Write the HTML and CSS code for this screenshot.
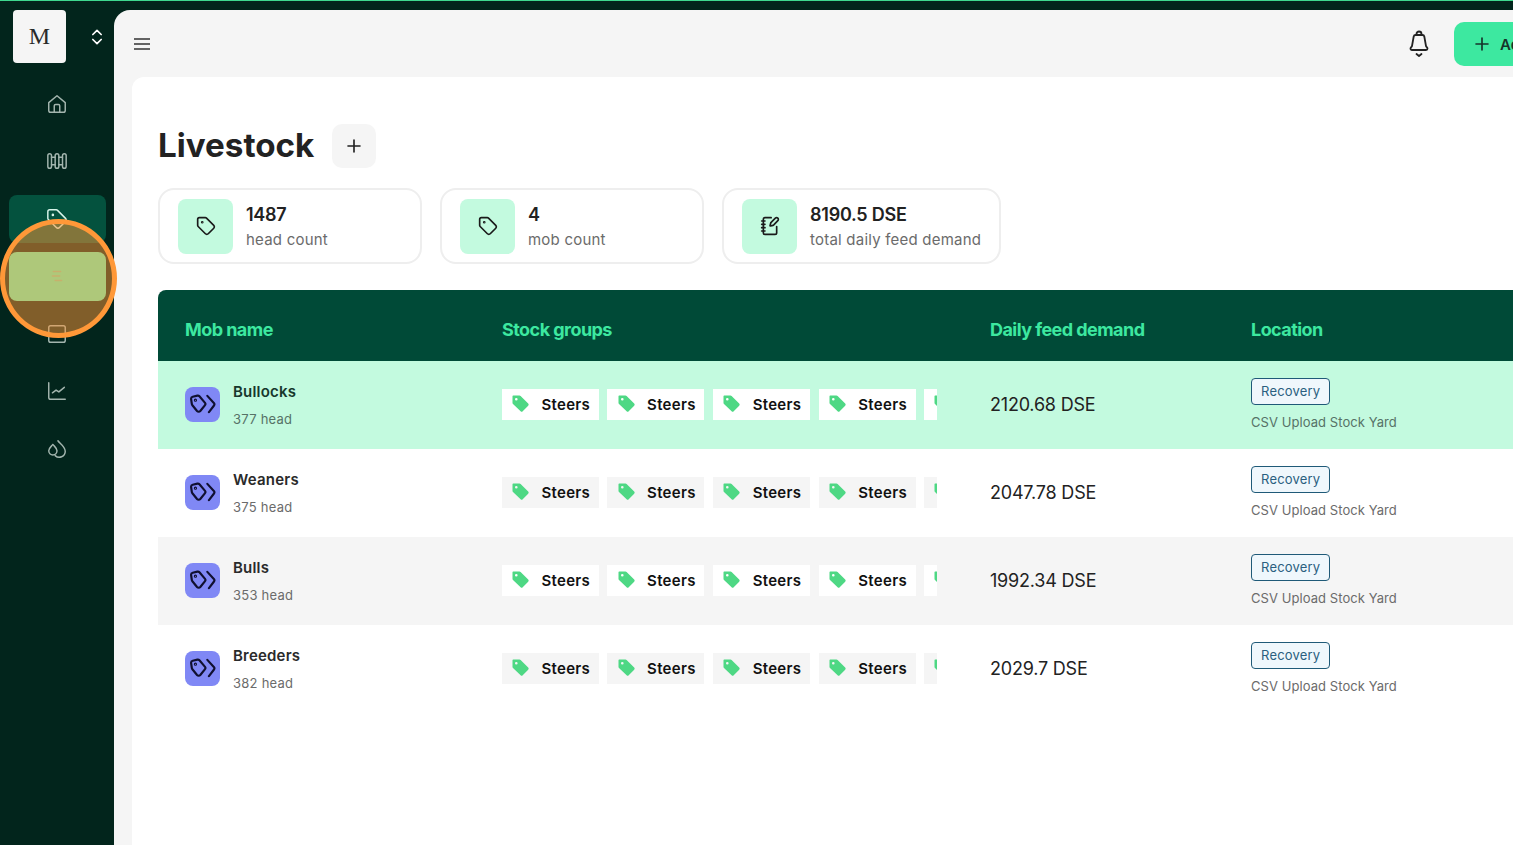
FILE: index.html
```html
<!DOCTYPE html>
<html lang="en">

<head>
  <meta charset="UTF-8" />
  <meta name="viewport" content="width=device-width, initial-scale=1.0" />
  <title>Livestock</title>
  <link rel="stylesheet" href="styles.css">
</head>

<body>
  <svg class="icon-defs" aria-hidden="true">
    <symbol id="i-tag" viewBox="0 0 24 24"><path d="M12.6 2.6A2 2 0 0 0 11.2 2H4a2 2 0 0 0-2 2v7.2a2 2 0 0 0 .6 1.4l8.7 8.7a2.4 2.4 0 0 0 3.4 0l6.6-6.6a2.4 2.4 0 0 0 0-3.4z" /><circle cx="7.5" cy="7.5" r=".6" /></symbol>
    <symbol id="i-tags" viewBox="0 0 24 24"><path d="M2.500 5.300 6.800 4.300a2 2 0 0 1 1.900.6l5 5.800a2 2 0 0 1 0 2.600l-4.200 5.200a2 2 0 0 1-3 0l-4.300-5.300a2 2 0 0 1-.5-1.200L1 7.200a2 2 0 0 1 1.500-1.900z" /><circle cx="5" cy="8.500" r=".5" /><path d="M16 4.500l6 6.500a2 2 0 0 1 0 2.600L17.500 19.500" /></symbol>
    <symbol id="i-chip" viewBox="0 0 20 20"><path class="solid" d="M2.200 1.500h6.300a1.500 1.500 0 0 1 1.100.5l7.600 7.600a1.500 1.500 0 0 1 0 2.100l-5.500 5.500a1.500 1.500 0 0 1-2.100 0L2 10.100a1.500 1.500 0 0 1-.5-1.100V2.200a.7.7 0 0 1 .7-.7zM5.300 4a1.300 1.300 0 1 0 0 2.600 1.300 1.300 0 0 0 0-2.600z" /></symbol>
    <symbol id="i-plus" viewBox="0 0 24 24"><path d="M12 4v16M4 12h16" /></symbol>
  </svg>

  <aside class="sidebar">
    <div class="brand">
      <div class="brand-logo">M</div>
      <svg class="brand-switch" viewBox="0 0 24 24"><path d="m7 9 5-5 5 5M7 15l5 5 5-5" /></svg>
    </div>
    <nav class="side-nav">
      <a class="side-item" href="#"><svg viewBox="0 0 24 24"><path d="M3 10.500 12 3l9 7.500V19a2 2 0 0 1-2 2H5a2 2 0 0 1-2-2z" /><path d="M9 21v-7a1.500 1.500 0 0 1 1.500-1.500h3A1.500 1.500 0 0 1 15 14v7" /></svg></a>
      <a class="side-item" href="#"><svg viewBox="0 0 24 24"><rect x="2" y="4" width="4" height="16" rx="2" /><rect x="10" y="4" width="4" height="16" rx="2" /><rect x="18" y="4" width="4" height="16" rx="2" /><path d="M6 8h4M14 8h4M6 16h4M14 16h4" /></svg></a>
      <a class="side-item active" href="#"><svg viewBox="0 0 24 24"><use href="#i-tag" /></svg></a>
      <a class="side-item hovered" href="#"><svg viewBox="0 0 24 24"><path d="M8 7h8M7 12h8M10 17h7" /></svg></a>
      <a class="side-item" href="#"><svg viewBox="0 0 24 24"><rect x="3" y="3" width="18" height="18" rx="2" /><path d="M3 14h18" /></svg></a>
      <a class="side-item" href="#"><svg viewBox="0 0 24 24"><path d="M3 3v16a2 2 0 0 0 2 2h16" /><path d="m7 14 4-3 3 2 6-5" /></svg></a>
      <a class="side-item" href="#"><svg viewBox="0 0 24 24"><path d="M7.500 7c-2 2.500-4.500 4-4.500 7a4.500 4.500 0 0 0 9 0c0-3-2.500-4.500-4.500-7z" /><path d="M13 3c2 3 8 6 8 11.500a6.500 6.500 0 0 1-11 4.700" /></svg></a>
    </nav>
  </aside>

  <!-- Marca de destaque sobre o menu -->
  <div class="spotlight"></div>

  <main class="main">
    <header class="topbar">
      <svg class="menu-btn" viewBox="0 0 16 12"><path d="M0 1h16M0 6h16M0 11h16" /></svg>
      <div class="topbar-actions">
        <svg class="bell" viewBox="0 0 24 28"><path d="M9.500 5V4a2.500 2.500 0 0 1 5 0v1" /><path d="M8.500 5h7c1 0 1.600.6 1.800 1.500L19 16c.2 1 1.500 1.500 1.500 2.500 0 .8-.6 1.500-1.500 1.500H5c-.9 0-1.500-.7-1.500-1.500 0-1 1.300-1.500 1.500-2.500l1.700-9.500C6.900 5.600 7.500 5 8.500 5z" /><path d="m9.500 24 2.500 2 2.500-2" /></svg>
        <button class="add-btn"><svg viewBox="0 0 24 24"><use href="#i-plus" /></svg>Add mob</button>
      </div>
    </header>

    <section class="panel">
      <div class="title-row">
        <h1>Livestock</h1>
        <button class="title-add"><svg viewBox="0 0 24 24"><use href="#i-plus" /></svg></button>
      </div>

      <div class="stats">
        <div class="stat">
          <div class="stat-icon"><svg viewBox="0 0 24 24"><use href="#i-tag" /></svg></div>
          <div class="stat-text">
            <div class="stat-value">1487</div>
            <div class="stat-label">head count</div>
          </div>
        </div>
        <div class="stat">
          <div class="stat-icon"><svg viewBox="0 0 24 24"><use href="#i-tag" /></svg></div>
          <div class="stat-text">
            <div class="stat-value">4</div>
            <div class="stat-label">mob count</div>
          </div>
        </div>
        <div class="stat">
          <div class="stat-icon"><svg viewBox="0 0 24 24"><path d="M13.400 2H6a2 2 0 0 0-2 2v16a2 2 0 0 0 2 2h12a2 2 0 0 0 2-2v-7.400" /><path d="M2 6h4M2 10h4M2 14h4M2 18h4" /><path d="M21.400 5.600a1 1 0 1 0-3-3l-5 5a2 2 0 0 0-.5.900l-.8 2.900a.5.500 0 0 0 .6.600l2.900-.8a2 2 0 0 0 .9-.5z" /></svg></div>
          <div class="stat-text">
            <div class="stat-value">8190.5 DSE</div>
            <div class="stat-label">total daily feed demand</div>
          </div>
        </div>
      </div>

      <div class="mob-table">
        <div class="mob-row mob-head">
          <div>Mob name</div>
          <div>Stock groups</div>
          <div>Daily feed demand</div>
          <div>Location</div>
        </div>

        <div class="mob-row selected">
          <div class="mob-name">
            <div class="mob-icon"><svg viewBox="0 0 24 24"><use href="#i-tags" /></svg></div>
            <div class="mob-text">
              <div class="mob-title">Bullocks</div>
              <div class="mob-sub">377 head</div>
            </div>
          </div>
          <div class="chips">
            <span class="chip"><svg viewBox="0 0 20 20"><use href="#i-chip" /></svg>Steers</span>
            <span class="chip"><svg viewBox="0 0 20 20"><use href="#i-chip" /></svg>Steers</span>
            <span class="chip"><svg viewBox="0 0 20 20"><use href="#i-chip" /></svg>Steers</span>
            <span class="chip"><svg viewBox="0 0 20 20"><use href="#i-chip" /></svg>Steers</span>
            <span class="chip"><svg viewBox="0 0 20 20"><use href="#i-chip" /></svg></span>
          </div>
          <div class="demand">2120.68 DSE</div>
          <div class="location">
            <span class="badge">Recovery</span>
            <div class="mob-place">CSV Upload Stock Yard</div>
          </div>
        </div>

        <div class="mob-row">
          <div class="mob-name">
            <div class="mob-icon"><svg viewBox="0 0 24 24"><use href="#i-tags" /></svg></div>
            <div class="mob-text">
              <div class="mob-title">Weaners</div>
              <div class="mob-sub">375 head</div>
            </div>
          </div>
          <div class="chips">
            <span class="chip"><svg viewBox="0 0 20 20"><use href="#i-chip" /></svg>Steers</span>
            <span class="chip"><svg viewBox="0 0 20 20"><use href="#i-chip" /></svg>Steers</span>
            <span class="chip"><svg viewBox="0 0 20 20"><use href="#i-chip" /></svg>Steers</span>
            <span class="chip"><svg viewBox="0 0 20 20"><use href="#i-chip" /></svg>Steers</span>
            <span class="chip"><svg viewBox="0 0 20 20"><use href="#i-chip" /></svg></span>
          </div>
          <div class="demand">2047.78 DSE</div>
          <div class="location">
            <span class="badge">Recovery</span>
            <div class="mob-place">CSV Upload Stock Yard</div>
          </div>
        </div>

        <div class="mob-row striped">
          <div class="mob-name">
            <div class="mob-icon"><svg viewBox="0 0 24 24"><use href="#i-tags" /></svg></div>
            <div class="mob-text">
              <div class="mob-title">Bulls</div>
              <div class="mob-sub">353 head</div>
            </div>
          </div>
          <div class="chips">
            <span class="chip"><svg viewBox="0 0 20 20"><use href="#i-chip" /></svg>Steers</span>
            <span class="chip"><svg viewBox="0 0 20 20"><use href="#i-chip" /></svg>Steers</span>
            <span class="chip"><svg viewBox="0 0 20 20"><use href="#i-chip" /></svg>Steers</span>
            <span class="chip"><svg viewBox="0 0 20 20"><use href="#i-chip" /></svg>Steers</span>
            <span class="chip"><svg viewBox="0 0 20 20"><use href="#i-chip" /></svg></span>
          </div>
          <div class="demand">1992.34 DSE</div>
          <div class="location">
            <span class="badge">Recovery</span>
            <div class="mob-place">CSV Upload Stock Yard</div>
          </div>
        </div>

        <div class="mob-row">
          <div class="mob-name">
            <div class="mob-icon"><svg viewBox="0 0 24 24"><use href="#i-tags" /></svg></div>
            <div class="mob-text">
              <div class="mob-title">Breeders</div>
              <div class="mob-sub">382 head</div>
            </div>
          </div>
          <div class="chips">
            <span class="chip"><svg viewBox="0 0 20 20"><use href="#i-chip" /></svg>Steers</span>
            <span class="chip"><svg viewBox="0 0 20 20"><use href="#i-chip" /></svg>Steers</span>
            <span class="chip"><svg viewBox="0 0 20 20"><use href="#i-chip" /></svg>Steers</span>
            <span class="chip"><svg viewBox="0 0 20 20"><use href="#i-chip" /></svg>Steers</span>
            <span class="chip"><svg viewBox="0 0 20 20"><use href="#i-chip" /></svg></span>
          </div>
          <div class="demand">2029.7 DSE</div>
          <div class="location">
            <span class="badge">Recovery</span>
            <div class="mob-place">CSV Upload Stock Yard</div>
          </div>
        </div>
      </div>
    </section>
  </main>
</body>

</html>
```

FILE: styles.css
```css
:root {
  --verde-escuro: #02251c;
  --verde-tabela: #004a37;
  --verde-vivo: #3de8a0;
  --menta: #c3fadf;
  --cinza-claro: #f5f5f5;
  --texto: #222;
  --texto-suave: #6b6b6b;
}

html,
body {
  height: 100%;
}

body {
  margin: 0;
  display: flex;
  overflow: hidden;
  font-family: Inter, 'Noto Sans', sans-serif;
  color: var(--texto);
  background-color: var(--verde-escuro);
  border-top: 1px solid #3ed98f;
  box-sizing: border-box;
}

svg {
  fill: none;
  stroke: currentColor;
  stroke-width: 2;
  stroke-linecap: round;
  stroke-linejoin: round;
  flex-shrink: 0;
}

.icon-defs {
  display: none;
}

/* Sidebar */
.sidebar {
  width: 114px;
  flex-shrink: 0;
  padding: 9px 0 0 9px;
  box-sizing: border-box;
}

.brand {
  display: flex;
  align-items: center;
  padding-left: 4px;
  gap: 21px;
  height: 53px;
}

.brand-logo {
  width: 53px;
  height: 53px;
  flex-shrink: 0;
  display: flex;
  align-items: center;
  justify-content: center;
  background-color: var(--cinza-claro);
  border-radius: 4px;
  font-family: 'Liberation Serif', serif;
  font-size: 24px;
  color: #2a2a2a;
}

.brand-switch {
  width: 20px;
  height: 20px;
  color: #fff;
}

.side-nav {
  margin-top: 16.500px;
  display: flex;
  flex-direction: column;
  gap: 9px;
}

.side-item {
  height: 48.500px;
  width: 97px;
  padding-right: 1px;
  box-sizing: border-box;
  display: flex;
  align-items: center;
  justify-content: center;
  border-radius: 8px;
  color: #a3b5ae;
}

.side-item svg {
  width: 22px;
  height: 22px;
  stroke-width: 1.600;
}

.side-item.active {
  background-color: #04523e;
  color: #d8f5ea;
}

.side-item.hovered {
  background-color: #5df8bc;
  color: #8fc9a0;
}

.spotlight {
  position: absolute;
  left: 0;
  top: 219px;
  width: 117px;
  height: 119px;
  box-sizing: border-box;
  border: 5px solid #ff9838;
  border-radius: 50%;
  background-color: rgba(255, 152, 56, 0.5);
}

/* Area principal */
.main {
  width: 1500px;
  flex-shrink: 0;
  margin-top: 9px;
  background-color: var(--cinza-claro);
  border-top-left-radius: 16px;
}

.topbar {
  height: 67px;
  display: flex;
  align-items: center;
  justify-content: space-between;
  padding-left: 20px;
  box-sizing: border-box;
}

.menu-btn {
  width: 16px;
  height: 12px;
  stroke-width: 1.500;
  color: #333;
}

.topbar-actions {
  display: flex;
  align-items: center;
  gap: 23px;
}

.bell {
  width: 24px;
  height: 28px;
  margin-left: 1px;
  color: #222;
  stroke-width: 1.800;
}

.add-btn {
  width: 160px;
  height: 44px;
  margin-top: 1px;
  display: flex;
  align-items: center;
  gap: 9px;
  padding: 0 0 0 19px;
  border: none;
  border-radius: 10px;
  background-color: var(--verde-vivo);
  color: #16332a;
  font-family: inherit;
  font-size: 15px;
  font-weight: 600;
}

.add-btn svg {
  width: 18px;
  height: 18px;
  stroke-width: 2.200;
}

.panel {
  margin-left: 18px;
  min-height: 768px;
  box-sizing: border-box;
  padding: 47px 0 0 26px;
  background-color: #fff;
  border-top-left-radius: 12px;
}

.title-row {
  display: flex;
  align-items: center;
  gap: 18px;
}

h1 {
  margin: 0 0 3px;
  font-size: 33.200px;
  font-weight: 700;
  color: var(--texto);
}

.title-add {
  width: 44px;
  height: 44px;
  display: flex;
  align-items: center;
  justify-content: center;
  padding: 0;
  border: none;
  border-radius: 10px;
  background-color: var(--cinza-claro);
  color: #222;
}

.title-add svg {
  width: 18px;
  height: 18px;
  stroke-width: 2.200;
}

/* Cartoes de resumo */
.stats {
  margin-top: 20px;
  display: flex;
  gap: 18px;
}

.stat {
  min-width: 264px;
  height: 76px;
  box-sizing: border-box;
  display: flex;
  align-items: center;
  gap: 13px;
  padding: 0 18px;
  border: 2px solid #eeeeee;
  border-radius: 16px;
  background-color: #fff;
}

.stat-icon {
  width: 55px;
  height: 55px;
  display: flex;
  align-items: center;
  justify-content: center;
  border-radius: 8px;
  background-color: var(--menta);
  color: #1a1a1a;
}

.stat-icon svg {
  width: 20px;
  height: 20px;
}

.stat-text {
  padding-top: 1px;
}

.stat-value {
  font-size: 18px;
  font-weight: 600;
  line-height: 22px;
  letter-spacing: -0.25px;
}

.stat-label {
  margin-top: 4px;
  font-size: 15px;
  letter-spacing: 0.22px;
  line-height: 20px;
  color: var(--texto-suave);
}

/* Tabela de lotes */
.mob-table {
  margin-top: 26px;
}

.mob-row {
  height: 88px;
  box-sizing: border-box;
  display: grid;
  grid-template-columns: 317px 488px 261px 1fr;
  align-items: center;
  padding: 0 0 2px 27px;
}

.mob-head {
  height: 71px;
  padding: 8px 0 0 27px;
  background-color: var(--verde-tabela);
  border-top-left-radius: 8px;
  color: var(--verde-vivo);
  font-size: 18px;
  font-weight: 700;
  letter-spacing: -0.55px;
}

.mob-row.selected {
  background-color: var(--menta);
}

.mob-row.striped {
  background-color: var(--cinza-claro);
}

.mob-name {
  display: flex;
  align-items: center;
  gap: 13px;
}

.mob-icon {
  width: 35px;
  height: 35px;
  display: flex;
  align-items: center;
  justify-content: center;
  border-radius: 8px;
  background-color: #8088f5;
  color: #101030;
}

.mob-icon svg {
  width: 26px;
  height: 26px;
}

.mob-text {
  padding-top: 2px;
}

.mob-title {
  font-size: 15px;
  font-weight: 600;
  line-height: 20px;
  letter-spacing: 0.2px;
  color: #2a2a2a;
}

.selected .mob-title {
  color: #17372c;
}

.mob-sub {
  margin-top: 7px;
  font-size: 13px;
  line-height: 20px;
  letter-spacing: 0.25px;
  color: var(--texto-suave);
}

.selected .mob-sub,
.selected .mob-place {
  color: #567267;
}

.chips {
  width: 435.250px;
  margin-left: -0.25px;
  display: flex;
  gap: 8.600px;
  overflow: hidden;
}

.chip {
  height: 31px;
  width: 97px;
  flex-shrink: 0;
  box-sizing: border-box;
  display: flex;
  align-items: center;
  gap: 10.500px;
  padding-left: 9.250px;
  background-color: var(--cinza-claro);
  font-size: 15px;
  font-weight: 600;
  letter-spacing: 0.3px;
  color: #111;
}

.selected .chip,
.striped .chip {
  background-color: #fff;
}

.chip svg {
  width: 20px;
  height: 20px;
  stroke: none;
}

.solid {
  fill: #4ed884;
  fill-rule: evenodd;
}

.demand {
  font-size: 18px;
  letter-spacing: -0.2px;
  color: #222;
}

.location {
  display: flex;
  flex-direction: column;
  align-items: flex-start;
  padding-top: 1px;
}

.badge {
  height: 27px;
  box-sizing: border-box;
  display: flex;
  align-items: center;
  padding: 0 9px;
  border: 1px solid #1f5a78;
  border-radius: 4px;
  background-color: #eff7fc;
  font-size: 13px;
  letter-spacing: 0.2px;
  color: #2a5f80;
}

.mob-place {
  margin-top: 7px;
  font-size: 13px;
  line-height: 20px;
  letter-spacing: 0.07px;
  color: var(--texto-suave);
}
```
